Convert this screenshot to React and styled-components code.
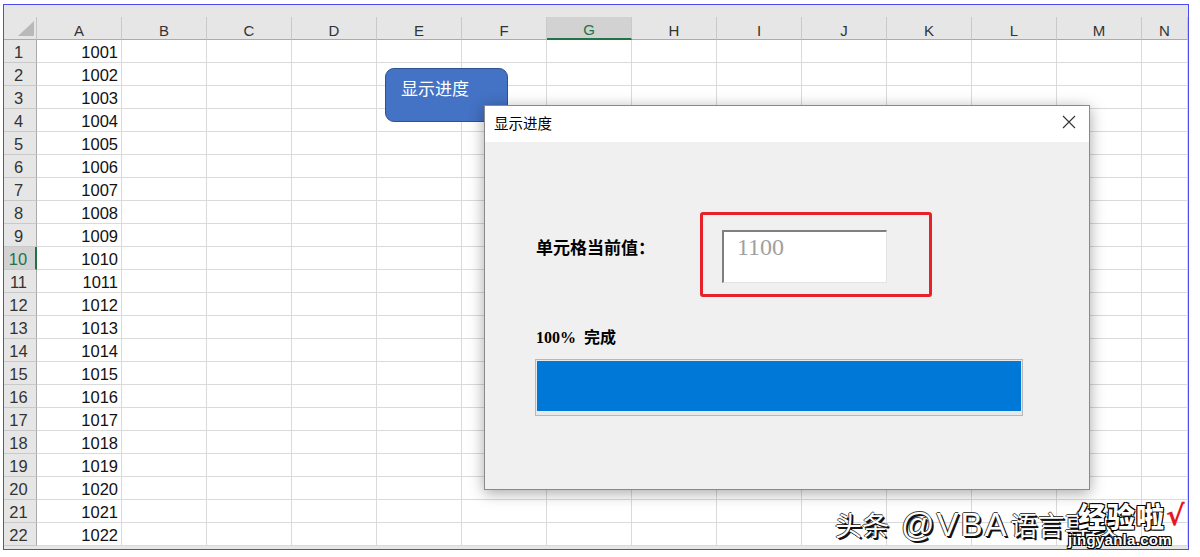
import React from 'react';
import styled, { createGlobalStyle } from 'styled-components';

const GlobalStyle = createGlobalStyle`
  body {
    margin: 0;
    background: #fff;
  }
`;

const COLS = ['A', 'B', 'C', 'D', 'E', 'F', 'G', 'H', 'I', 'J', 'K', 'L', 'M', 'N'];
const ROWS = Array.from({ length: 22 }, (_, i) => i + 1);

const Page = styled.div`
  position: relative;
  width: 1200px;
  height: 557px;
  padding: 4px 0 0 3px;
  box-sizing: border-box;
  background: #fff;
  overflow: hidden;
`;

// cadre bleu autour de la capture
const Frame = styled.div`
  position: relative;
  width: 1186px;
  height: 546px;
  box-sizing: border-box;
  border: 1px solid #4c4cf5;
  background: #e6e6e6;
  overflow: hidden;
`;

const TopStrip = styled.div`
  height: 12px;
  background: #e6e6e6;
`;

const Sheet = styled.div`
  display: grid;
  grid-template-columns: 33px repeat(13, 85px) 1fr;
  grid-auto-rows: 23px;
  font-family: 'Liberation Sans', Arial, sans-serif;
`;

const Corner = styled.div`
  position: relative;
  background: #e6e6e6;
  border-right: 1px solid #c4c4c4;
  border-bottom: 1px solid #ababab;
  box-sizing: border-box;

  &::after {
    content: '';
    position: absolute;
    right: 2px;
    bottom: 3px;
    width: 0;
    height: 0;
    border-left: 16px solid transparent;
    border-bottom: 15px solid #b9b9b9;
  }
`;

const ColHeader = styled.div`
  display: flex;
  align-items: center;
  justify-content: center;
  padding-top: 4px;
  box-sizing: border-box;
  background: ${(p) => (p.$active ? '#d2d2d2' : '#e6e6e6')};
  color: ${(p) => (p.$active ? '#217346' : '#333')};
  border-right: 1px solid #c9c9c9;
  border-bottom: ${(p) => (p.$active ? '2px solid #217346' : '1px solid #ababab')};
  font-size: 15px;
`;

const RowHeader = styled.div`
  display: flex;
  align-items: center;
  justify-content: center;
  padding: 3px 3px 0 0;
  box-sizing: border-box;
  background: ${(p) => (p.$active ? '#d2d2d2' : '#e6e6e6')};
  color: ${(p) => (p.$active ? '#217346' : '#333')};
  border-right: ${(p) => (p.$active ? '2px solid #217346' : '1px solid #ababab')};
  border-bottom: 1px solid #c9c9c9;
  font-size: 16.5px;
`;

const Cell = styled.div`
  display: flex;
  align-items: center;
  justify-content: flex-end;
  padding: 3px 3px 0 0;
  box-sizing: border-box;
  background: #fff;
  border-right: 1px solid #dadada;
  border-bottom: 1px solid #dadada;
  color: #111;
  font-size: 16.5px;
`;

// forme "bouton" posée sur la feuille
const ShapeButton = styled.div`
  position: absolute;
  left: 381px;
  top: 63px;
  width: 123px;
  height: 54px;
  box-sizing: border-box;
  padding: 7px 0 0 15px;
  background: #4472c4;
  border: 1px solid #2f528f;
  border-radius: 9px;
  color: #fff;
  font-family: 'Noto Sans CJK SC', sans-serif;
  font-size: 17px;
  line-height: 24px;
`;

const Dialog = styled.div`
  position: absolute;
  left: 480px;
  top: 100px;
  width: 606px;
  height: 385px;
  box-sizing: border-box;
  display: flex;
  flex-direction: column;
  border: 1px solid #8a8a8a;
  background: #f0f0f0;
  box-shadow: 0 3px 14px rgba(0, 0, 0, 0.35);
`;

const TitleBar = styled.div`
  height: 36px;
  box-sizing: border-box;
  display: flex;
  align-items: center;
  justify-content: space-between;
  padding: 0 13px 4px 9px;
  background: #fff;
  font-family: 'Noto Sans CJK SC', sans-serif;
  font-size: 14.5px;
  color: #000;
`;

const CloseIcon = () => (
  <svg width="14" height="14" viewBox="0 0 14 14">
    <path d="M1 1 L13 13 M13 1 L1 13" stroke="#333" strokeWidth="1.1" fill="none" />
  </svg>
);

const Body = styled.div`
  flex: 1;
  padding: 70px 0 0 51px;
  font-family: 'Liberation Serif', 'Noto Sans CJK SC', serif;
`;

const ValueRow = styled.div`
  display: flex;
  align-items: flex-start;
`;

const Label = styled.div`
  width: 164px;
  margin-top: ${(p) => p.$top || 0}px;
  font-size: ${(p) => p.$size || 16}px;
  line-height: 18px;
  font-weight: 700;
  color: #000;
  white-space: pre;
`;

const Highlight = styled.div`
  width: 232px;
  height: 85px;
  box-sizing: border-box;
  padding: 15px 0 0 19px;
  border: 3px solid #e8202a;
  border-radius: 3px;
`;

const TextBox = styled.div`
  width: 165px;
  height: 53px;
  box-sizing: border-box;
  padding: 1px 0 0 13px;
  background: #fff;
  border-top: 2px solid #7f7f7f;
  border-left: 2px solid #7f7f7f;
  border-right: 1px solid #e3e3e3;
  border-bottom: 1px solid #e3e3e3;
  color: #a0a0a0;
  font-family: 'Liberation Serif', serif;
  font-size: 24px;
  line-height: 28px;
`;

const ProgressTrack = styled.div`
  width: 488px;
  height: 57px;
  margin: 12px 0 0 -1px;
  box-sizing: border-box;
  padding: 1px 1px 4px 1px;
  border: 1px solid #b8b8b8;
  background: #e8e8e8;
`;

const ProgressFill = styled.div`
  height: 100%;
  background: #0078d7;
`;

// filigrane en bas à droite
const Watermark = styled.div`
  position: absolute;
  left: 831px;
  top: 503px;
  display: flex;
  align-items: baseline;
  font-family: 'Noto Sans CJK SC', sans-serif;
  font-size: 27px;
  line-height: 34px;
  color: #fff;
  white-space: nowrap;
  text-shadow: 1px 1px 0 #111, 2px 2px 0 #111, -1px 0 0 #444, 0 -1px 0 #444;
`;

const Latin = styled.span`
  font-family: 'Liberation Sans', Arial, sans-serif;
  font-size: 33px;
  letter-spacing: 2px;
  margin: 0 2px 0 12px;
`;

const Logo = styled.div`
  position: absolute;
  left: 1074px;
  top: 497px;
  display: flex;
  flex-direction: column;
  align-items: flex-start;
  color: #fff;
  font-family: 'Noto Sans CJK SC', sans-serif;
  font-weight: 900;
  text-shadow: 1px 1px 0 #000, -1px -1px 0 #000, 1px -1px 0 #000, -1px 1px 0 #000;
`;

const LogoMain = styled.div`
  display: flex;
  align-items: center;
  font-size: 28px;
  line-height: 28px;
  letter-spacing: 1px;
`;

const Check = styled.span`
  color: #e8141e;
  font-family: 'DejaVu Sans', sans-serif;
  font-size: 28px;
  text-shadow: none;
  margin-left: 1px;
`;

const LogoSub = styled.div`
  margin: 2px 0 0 -10px;
  font-family: 'Liberation Sans', Arial, sans-serif;
  font-size: 15px;
  line-height: 15px;
  font-weight: 700;
  letter-spacing: 0.3px;
`;

export default function App() {
  return (
    <Page>
      <GlobalStyle />
      <Frame>
        <TopStrip />
        <Sheet>
          <Corner />
          {COLS.map((c) => (
            <ColHeader key={c} $active={c === 'G'}>
              {c}
            </ColHeader>
          ))}
          {ROWS.map((r) => (
            <React.Fragment key={r}>
              <RowHeader $active={r === 10}>{r}</RowHeader>
              {COLS.map((c) => (
                <Cell key={c}>{c === 'A' ? 1000 + r : ''}</Cell>
              ))}
            </React.Fragment>
          ))}
        </Sheet>

        <ShapeButton>显示进度</ShapeButton>

        <Dialog>
          <TitleBar>
            <span>显示进度</span>
            <CloseIcon />
          </TitleBar>
          <Body>
            <ValueRow>
              <Label $top={28} $size={17}>单元格当前值：</Label>
              <Highlight>
                <TextBox>1100</TextBox>
              </Highlight>
            </ValueRow>
            <Label $top={32}>{'100%  完成'}</Label>
            <ProgressTrack>
              <ProgressFill style={{ width: '100%' }} />
            </ProgressTrack>
          </Body>
        </Dialog>

        <Watermark>
          头条<Latin>@VBA</Latin>语言専攻
        </Watermark>
        <Logo>
          <LogoMain>
            经验啦<Check>√</Check>
          </LogoMain>
          <LogoSub>jingyanla.com</LogoSub>
        </Logo>
      </Frame>
    </Page>
  );
}
